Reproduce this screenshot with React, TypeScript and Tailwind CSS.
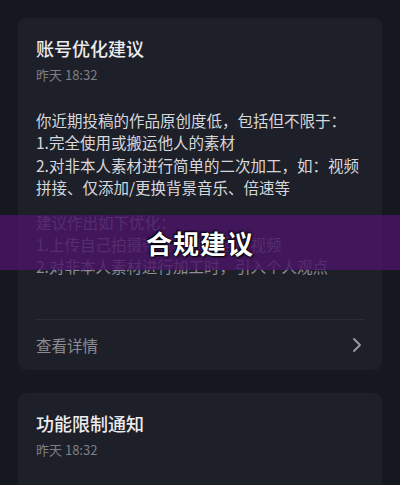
import React from "react";

const font = { fontFamily: '"Noto Sans CJK SC", "Noto Sans", sans-serif' };

function Card({ title, children }: { title: string; children?: React.ReactNode }) {
  return (
    <div className="bg-[#1e2029] rounded-lg px-[18px] pt-[17px]">
      <div className="text-[18px] leading-[26px] font-medium text-[#ececef]">{title}</div>
      <div className="text-[13px] leading-[20px] text-[#7d7f87] mt-[4px]">昨天 18:32</div>
      {children}
    </div>
  );
}

export default function App() {
  return (
    <div className="relative w-[400px] h-[485px] overflow-hidden bg-[#161821] px-[18px] pt-[18px]" style={font}>
      <Card title="账号优化建议">
        <div className="mt-[24px] text-[15.5px] leading-[22.3px] text-[#d6d7db]">
          <div>你近期投稿的作品原创度低，包括但不限于：</div>
          <div>1.完全使用或搬运他人的素材</div>
          <div>2.对非本人素材进行简单的二次加工，如：视频</div>
          <div>拼接、仅添加/更换背景音乐、倍速等</div>
        </div>
        <div className="mt-[13px] text-[15.5px] leading-[22px] text-[#8b8c94]">
          <div>建议作出如下优化：</div>
          <div>1.上传自己拍摄带有原创内容的视频</div>
          <div>2.对非本人素材进行加工时，引入个人观点</div>
        </div>
        <div className="mt-[42px] h-px bg-[#2a2c35]" />
        <div className="flex items-center justify-between h-[50px]">
          <span className="text-[15.5px] text-[#8b8c94]">查看详情</span>
          <svg width="10" height="16" viewBox="0 0 10 16" fill="none" className="mr-[2px]">
            <path d="M2 2l6 6-6 6" stroke="#9a9ba3" strokeWidth="1.8" strokeLinecap="round" strokeLinejoin="round" />
          </svg>
        </div>
      </Card>
      <div className="mt-[23px]">
        <Card title="功能限制通知">
          <div className="h-[60px]" />
        </Card>
      </div>
      <div className="absolute left-0 right-0 top-[215px] h-[55px] bg-[#4a1466]/80 flex items-center justify-center">
        <span
          className="text-[26px] font-bold text-white tracking-[1px]"
          style={{ textShadow: "0 0 2px #000, 1px 1px 2px #000, -1px -1px 2px #000" }}
        >
          合规建议
        </span>
      </div>
    </div>
  );
}
